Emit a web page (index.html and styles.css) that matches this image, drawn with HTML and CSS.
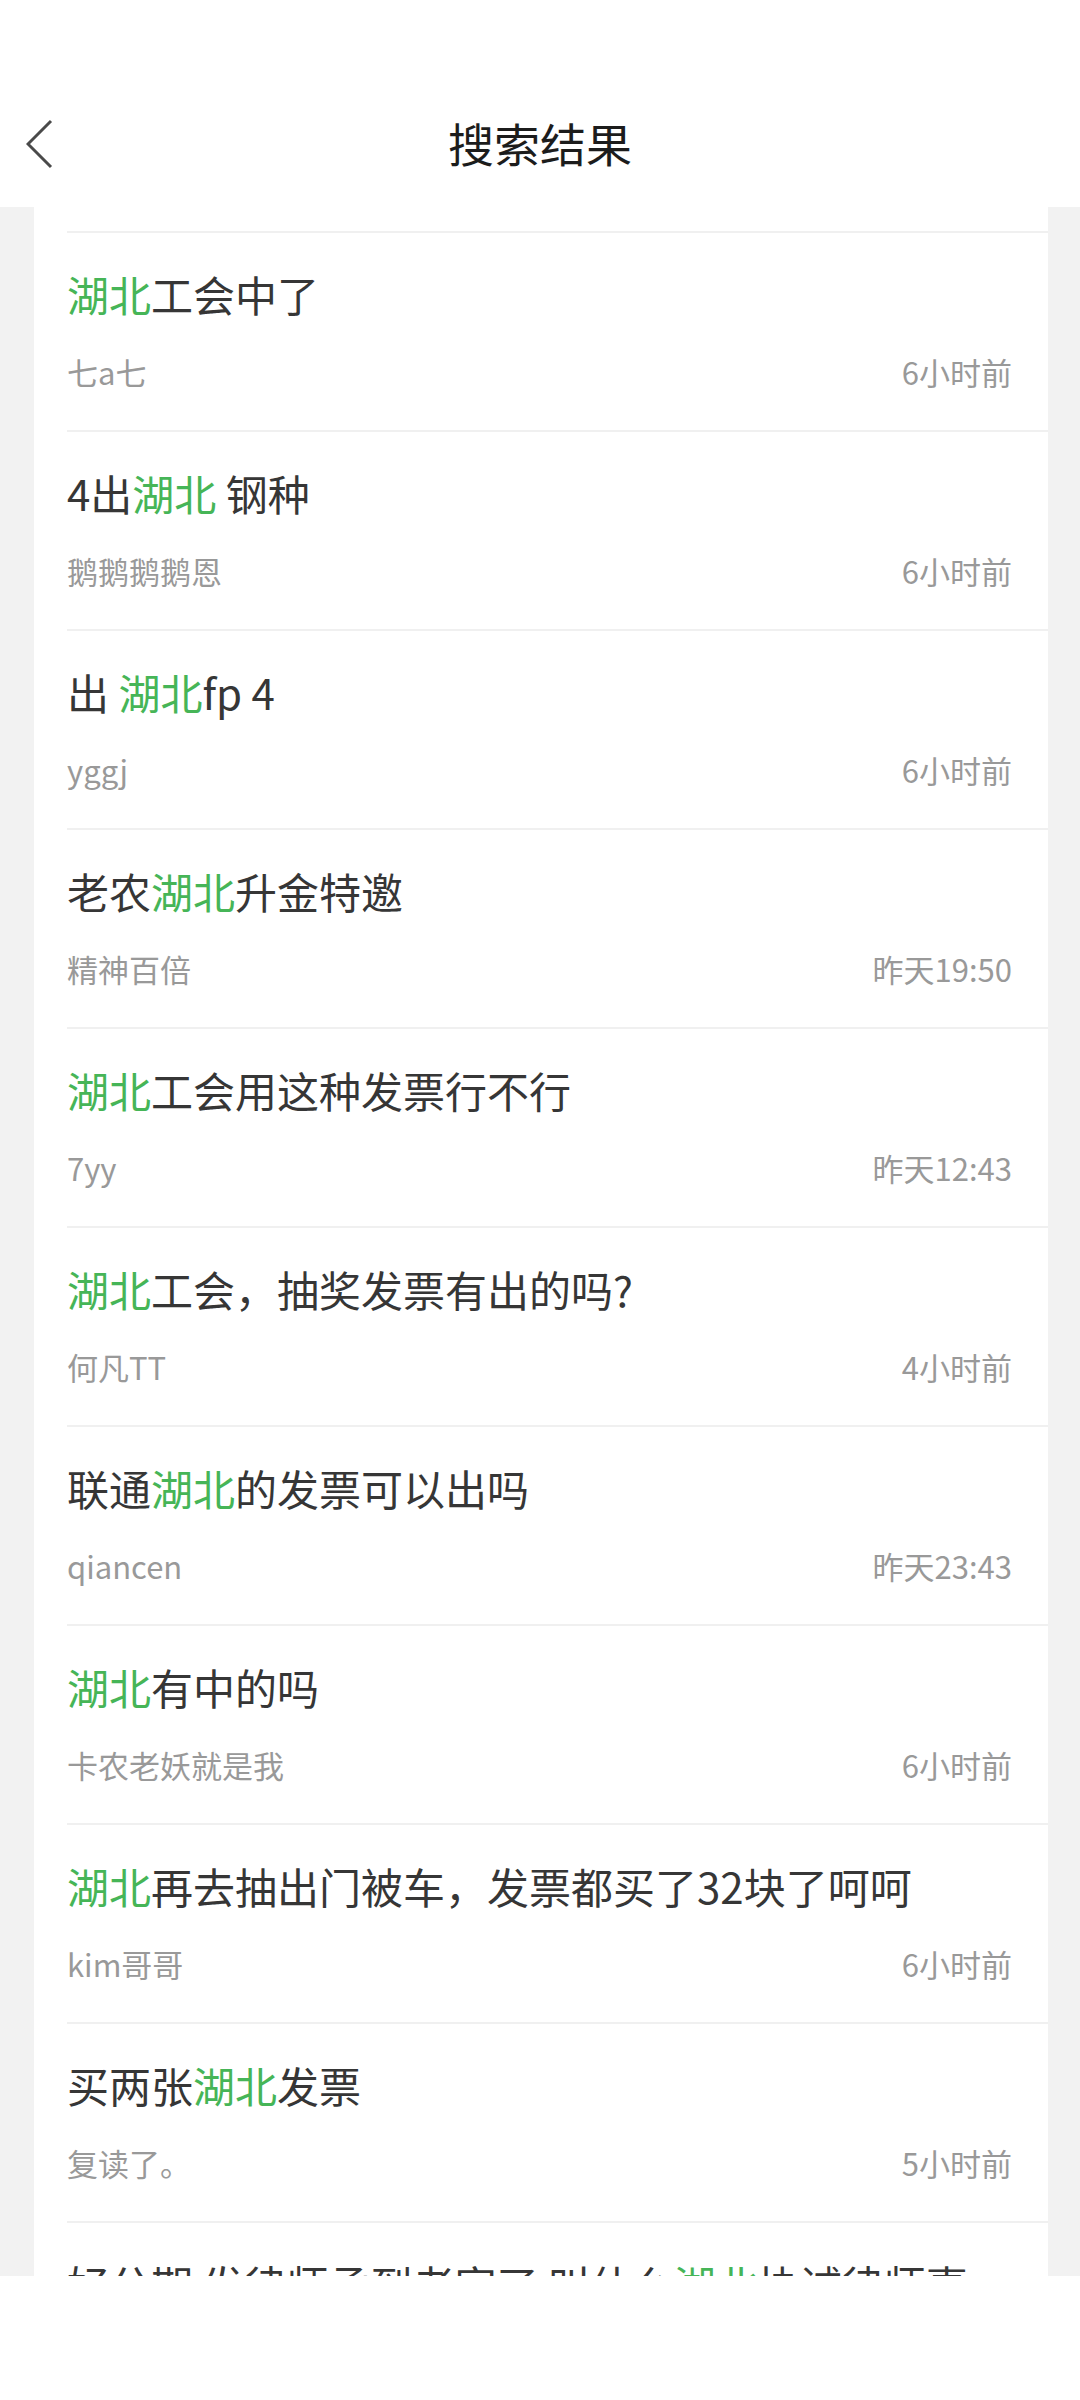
FILE: index.html
```html
<!DOCTYPE html>
<html lang="zh-CN">
<head>
  <meta charset="UTF-8" />
  <meta name="viewport" content="width=device-width, initial-scale=1.0" />
  <title>搜索结果</title>
  <link rel="stylesheet" href="styles.css">
</head>
<body>
  <div class="top-bar">
    <button class="back-btn" aria-label="返回">
      <svg width="30" height="52" viewBox="0 0 30 52">
        <polyline points="25,2 2,25 25,48" fill="none" stroke="#4a4a4a" stroke-width="3" stroke-linejoin="miter"/>
      </svg>
    </button>
    <h1 class="page-title">搜索结果</h1>
  </div>

  <div class="page">
    <div class="result-list">
      <div class="list-head"></div>

      <div class="result-item">
        <div class="result-title"><em>湖北</em>工会中了</div>
        <div class="result-meta"><span>七a七</span><span>6小时前</span></div>
      </div>
      <div class="result-item">
        <div class="result-title">4出<em>湖北</em> 钢种</div>
        <div class="result-meta"><span>鹅鹅鹅鹅恩</span><span>6小时前</span></div>
      </div>
      <div class="result-item">
        <div class="result-title">出 <em>湖北</em>fp 4</div>
        <div class="result-meta"><span>yggj</span><span>6小时前</span></div>
      </div>
      <div class="result-item">
        <div class="result-title">老农<em>湖北</em>升金特邀</div>
        <div class="result-meta"><span>精神百倍</span><span>昨天19:50</span></div>
      </div>
      <div class="result-item">
        <div class="result-title"><em>湖北</em>工会用这种发票行不行</div>
        <div class="result-meta"><span>7yy</span><span>昨天12:43</span></div>
      </div>
      <div class="result-item">
        <div class="result-title"><em>湖北</em>工会，抽奖发票有出的吗?</div>
        <div class="result-meta"><span>何凡TT</span><span>4小时前</span></div>
      </div>
      <div class="result-item">
        <div class="result-title">联通<em>湖北</em>的发票可以出吗</div>
        <div class="result-meta"><span>qiancen</span><span>昨天23:43</span></div>
      </div>
      <div class="result-item">
        <div class="result-title"><em>湖北</em>有中的吗</div>
        <div class="result-meta"><span>卡农老妖就是我</span><span>6小时前</span></div>
      </div>
      <div class="result-item">
        <div class="result-title"><em>湖北</em>再去抽出门被车，发票都买了32块了呵呵</div>
        <div class="result-meta"><span>kim哥哥</span><span>6小时前</span></div>
      </div>
      <div class="result-item">
        <div class="result-title">买两张<em>湖北</em>发票</div>
        <div class="result-meta"><span>复读了。</span><span>5小时前</span></div>
      </div>
      <div class="result-item">
        <div class="result-title">好分期 发律师函到老家了 叫什么<em>湖北</em>协诚律师事</div>
        <div class="result-meta"><span>小马哥</span><span>6小时前</span></div>
      </div>
    </div>
  </div>

  <div class="bottom-space"></div>
</body>
</html>
```

FILE: styles.css
```css
* {
  box-sizing: border-box;
}

body {
  margin: 0;
  width: 1080px;
  height: 2400px;
  overflow: hidden;
  background: #fff;
  font-family: "Noto Sans CJK SC", "Noto Sans", sans-serif;
  display: flex;
  flex-direction: column;
}

.top-bar {
  height: 207px;
  flex-shrink: 0;
  position: relative;
  display: flex;
  align-items: flex-end;
  justify-content: center;
  padding-bottom: 37px;
  background: #fff;
}

.back-btn {
  position: absolute;
  left: 26px;
  top: 119px;
  padding: 0;
  border: 0;
  background: none;
  line-height: 0;
}

.page-title {
  margin: 0;
  font-size: 46px;
  font-weight: 400;
  line-height: 56px;
  color: #1c1c1c;
}

.page {
  height: 2069px;
  flex-shrink: 0;
  overflow: hidden;
  background: #f2f2f2;
  padding: 0 32px 0 34px;
}

.result-list {
  background: #fff;
  padding-left: 33px;
  min-height: 100%;
}

.list-head {
  height: 24px;
}

.result-item {
  height: 199px;
  border-top: 2px solid #f0f0f0;
  padding: 33px 36px 0 0;
}

.result-title {
  font-size: 42px;
  line-height: 56px;
  color: #363636;
  white-space: nowrap;
}

.result-title em {
  font-style: normal;
  color: #46b557;
}

.result-meta {
  margin-top: 30px;
  display: flex;
  justify-content: space-between;
  font-size: 31px;
  line-height: 40px;
  color: #999;
}

.bottom-space {
  flex: 1;
  background: #fff;
}
```
